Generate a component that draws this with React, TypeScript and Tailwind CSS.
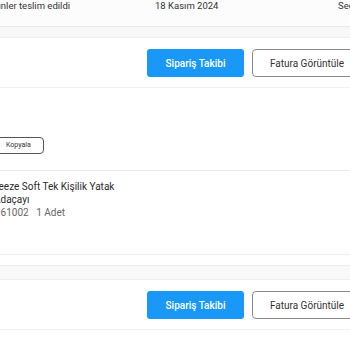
import React from "react";

function ActionRow() {
  return (
    <div className="flex justify-end gap-[8px] pt-[11px] pb-[10px] border-b border-[#f0f0f0] -mr-[12px]">
      <button className="w-[97px] h-[28px] rounded-[3px] bg-[#1a98f7] text-white text-[10px] font-medium">
        Sipariş Takibi
      </button>
      <button className="w-[110px] h-[28px] rounded-[4px] border border-[#8a8a8a] bg-white text-[#333] text-[10px]">
        Fatura Görüntüle
      </button>
    </div>
  );
}

export default function App() {
  return (
    <div className="w-[350px] h-[350px] overflow-hidden bg-white text-[#333] font-['Roboto',sans-serif]">
      {/* order summary strip */}
      <div className="h-[27px] bg-[#fcfcfc] border-b border-[#e8e8e8] flex text-[9.5px] leading-[11px] text-[#333]">
        <div className="w-[155px] -ml-[34px] shrink-0 whitespace-nowrap">Tüm ürünler teslim edildi</div>
        <div className="w-[217px] shrink-0 pl-[34px] whitespace-nowrap">18 Kasım 2024</div>
        <div className="whitespace-nowrap">Seçenekler</div>
      </div>
      <div className="h-[11px] bg-[#f8f8f8] border-b border-[#eeeeee]" />

      <ActionRow />

      {/* shipment info */}
      <div className="h-[83px] border-b border-[#ebebeb] flex items-end pb-[16px]">
        <button className="-ml-[6px] h-[17px] w-[50px] pl-[11px] text-left rounded-[4px] border border-[#555] text-[7px] text-[#333] bg-white">
          Kopyala
        </button>
      </div>

      {/* product */}
      <div className="h-[84px] border-b border-[#ececec] pt-[9px] text-[10px] leading-[13px]">
        <div className="-ml-[11px] text-[#2b2b2b] whitespace-nowrap">Breeze Soft Tek Kişilik Yatak</div>
        <div className="-ml-[6px] text-[#2b2b2b] whitespace-nowrap">Adaçayı</div>
        <div className="-ml-[5px] text-[#666] whitespace-nowrap">
          161002 &nbsp;&nbsp;1 Adet
        </div>
      </div>
      <div className="h-[11px] border-b border-[#eaeaea]" />
      <div className="h-[14px] bg-[#f9f9f9] border-b border-[#eeeeee]" />

      <ActionRow />
    </div>
  );
}
